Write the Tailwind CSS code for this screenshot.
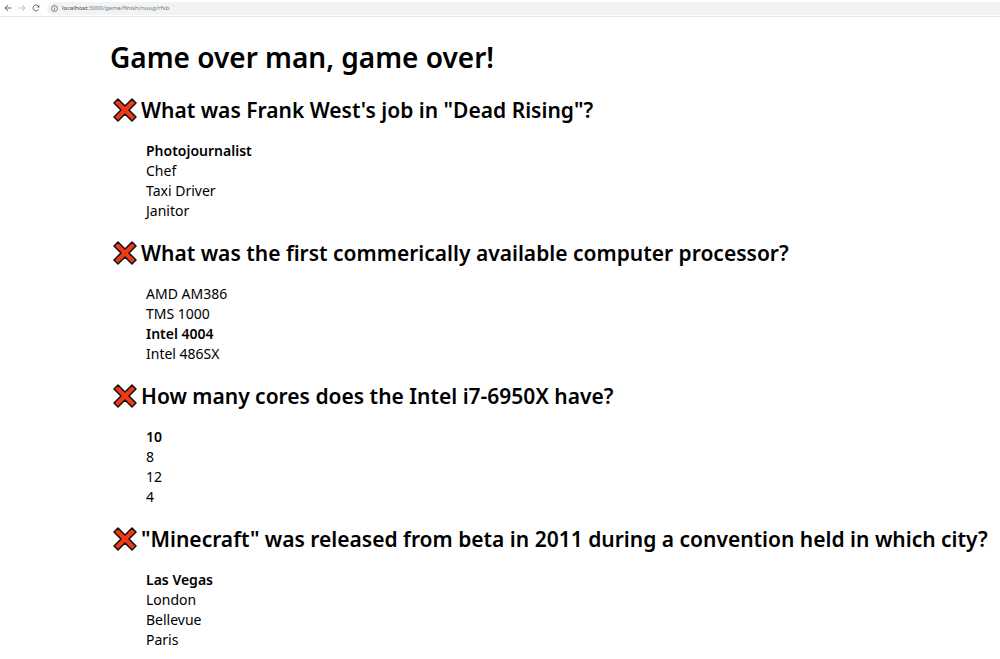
<!DOCTYPE html>
<html lang="en">
<head>
<meta charset="utf-8">
<meta name="viewport" content="width=device-width, initial-scale=1">
<title>Game over</title>
<script src="https://cdn.jsdelivr.net/npm/@tailwindcss/browser@4"></script>
</head>
<body class="bg-white text-black font-['Noto_Sans','Open_Sans',sans-serif]">
<svg class="hidden" aria-hidden="true">
  <symbol id="cross" viewBox="0 0 24 24">
    <path d="M5 1 12 8 19 1 23 5 16 12 23 19 19 23 12 16 5 23 1 19 8 12 1 5Z" fill="#f03a17" stroke="#111" stroke-width="1.5" stroke-linejoin="round"/>
  </symbol>
</svg>
<header class="flex h-[17px] items-center border-b border-[#e6e7e9] pl-1">
  <nav class="flex items-center gap-[6px]" aria-label="Browser">
    <button class="size-2" aria-label="Back"><svg class="size-2" viewBox="0 0 8 8" fill="none" stroke="#5f6368"><path d="M7.5 4H1M4 1 1 4l3 3"/></svg></button>
    <button class="size-2" aria-label="Forward"><svg class="size-2" viewBox="0 0 8 8" fill="none" stroke="#bcbec1"><path d="M.5 4H7M4 1l3 3-3 3"/></svg></button>
    <button class="size-2" aria-label="Reload"><svg class="size-2" viewBox="0 0 8 8" fill="none" stroke="#5f6368"><path d="M6.5 5.3A2.9 2.9 0 1 1 6.3 2.2"/><path d="M7.4.7v2.8H4.6Z" fill="#5f6368" stroke="none"/></svg></button>
  </nav>
  <div class="ml-[7px] flex h-[13px] flex-1 items-center gap-1 rounded-l-full bg-[#f1f3f4] pl-1">
    <svg class="size-[7px] shrink-0" viewBox="0 0 7 7" fill="none" stroke="#5f6368"><circle cx="3.5" cy="3.5" r="3" stroke-width=".8"/><path d="M3.5 3v2.3M3.5 1.6v.9" stroke-width=".8"/></svg>
    <p class="text-[6px] leading-3 text-[#70757a]"><span class="text-[#3c4043]">localhost</span>:3000/game/finish/nuug/rfxb</p>
  </div>
</header>
<main class="pt-5 pl-[110px]">
  <h1 class="text-[28px] leading-10 font-semibold whitespace-nowrap">Game over man, game over!</h1>
  <div class="mt-[18px] flex flex-col gap-[17px]">
    <section>
      <h2 class="flex items-center gap-1 pl-[3px] text-[21px] leading-[30px] font-semibold whitespace-nowrap"><svg class="size-6 shrink-0" role="img" aria-label="Wrong"><use href="#cross"/></svg>What was Frank West's job in "Dead Rising"?</h2>
      <ul class="mt-4 pl-9 text-sm leading-5"><li class="font-semibold">Photojournalist</li><li>Chef</li><li>Taxi Driver</li><li>Janitor</li></ul>
    </section>
    <section>
      <h2 class="flex items-center gap-1 pl-[3px] text-[21px] leading-[30px] font-semibold whitespace-nowrap"><svg class="size-6 shrink-0" role="img" aria-label="Wrong"><use href="#cross"/></svg>What was the first commerically available computer processor?</h2>
      <ul class="mt-4 pl-9 text-sm leading-5"><li>AMD AM386</li><li>TMS 1000</li><li class="font-semibold">Intel 4004</li><li>Intel 486SX</li></ul>
    </section>
    <section>
      <h2 class="flex items-center gap-1 pl-[3px] text-[21px] leading-[30px] font-semibold whitespace-nowrap"><svg class="size-6 shrink-0" role="img" aria-label="Wrong"><use href="#cross"/></svg>How many cores does the Intel i7-6950X have?</h2>
      <ul class="mt-4 pl-9 text-sm leading-5"><li class="font-semibold">10</li><li>8</li><li>12</li><li>4</li></ul>
    </section>
    <section>
      <h2 class="flex items-center gap-1 pl-[3px] text-[21px] leading-[30px] font-semibold whitespace-nowrap"><svg class="size-6 shrink-0" role="img" aria-label="Wrong"><use href="#cross"/></svg>"Minecraft" was released from beta in 2011 during a convention held in which city?</h2>
      <ul class="mt-4 pl-9 text-sm leading-5"><li class="font-semibold">Las Vegas</li><li>London</li><li>Bellevue</li><li>Paris</li></ul>
    </section>
  </div>
</main>
</body>
</html>
